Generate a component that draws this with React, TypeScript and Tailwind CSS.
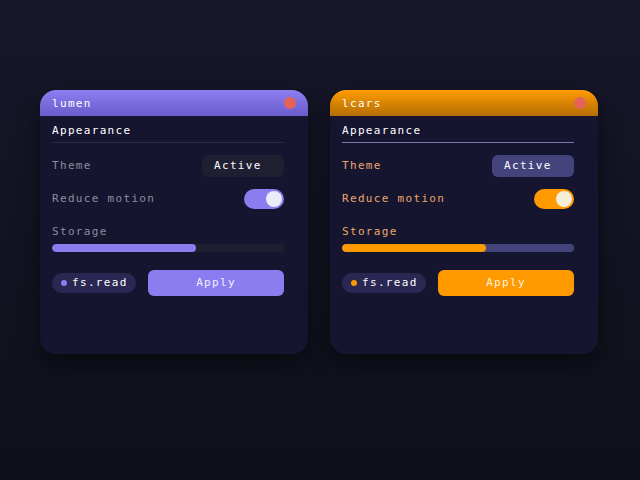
import React from 'react';

type Theme = {
  name: string;
  header: string;
  divider: string;
  label: string;
  selectBg: string;
  toggle: string;
  knob: string;
  fill: string;
  track: string;
  dot: string;
  button: string;
  buttonText: string;
};

const themes: Theme[] = [
  {
    name: 'lumen',
    header: 'bg-gradient-to-b from-[#8d7ef2] to-[#6b5ccb]',
    divider: 'bg-[#2c2a44]',
    label: 'text-[#8e8d9e]',
    selectBg: 'bg-[#1e2031]',
    toggle: 'bg-[#8b7cf0]',
    knob: 'bg-[#ecebfb]',
    fill: 'bg-[#8b7cf0]',
    track: 'bg-[#1e2031]',
    dot: 'bg-[#8b7cf0]',
    button: 'bg-[#8b7cf0]',
    buttonText: 'text-[#f1efff]',
  },
  {
    name: 'lcars',
    header: 'bg-gradient-to-b from-[#ff9d00] to-[#b46d04]',
    divider: 'bg-[#7b72a8]',
    label: 'text-[#eba86c]',
    selectBg: 'bg-[#45437c]',
    toggle: 'bg-[#ff9900]',
    knob: 'bg-[#f6eed8]',
    fill: 'bg-[#ff9900]',
    track: 'bg-[#45437c]',
    dot: 'bg-[#ff9900]',
    button: 'bg-[#ff9900]',
    buttonText: 'text-[#fff3dc]',
  },
];

const mono = "font-['DejaVu_Sans_Mono','Liberation_Mono',monospace] text-[11px] leading-[14px] tracking-[0.12em]";

const SettingsCard = ({ t }: { t: Theme }) => (
  <div className="w-[268px] h-[264px] rounded-2xl bg-[#161530] overflow-hidden shadow-[0_10px_24px_rgba(0,0,0,0.45)]">
    <div className={`h-[26px] px-3 flex items-center justify-between ${t.header}`}>
      <span className={`${mono} text-white pt-px`}>{t.name}</span>
      <span className="w-3 h-3 rounded-full bg-[#e5625a]" />
    </div>

    <div className="pl-3 pr-6 pt-2">
      <div className={`${mono} text-white`}>Appearance</div>
      <div className={`h-px mt-[4px] ${t.divider}`} />

      <div className="mt-3 flex items-center justify-between">
        <span className={`${mono} ${t.label}`}>Theme</span>
        <div className={`w-[82px] h-[22px] rounded-md pl-3 flex items-center ${t.selectBg}`}>
          <span className={`${mono} text-white`}>Active</span>
        </div>
      </div>

      <div className="mt-3 flex items-center justify-between">
        <span className={`${mono} ${t.label}`}>Reduce motion</span>
        <div className={`w-10 h-5 rounded-full p-[2px] flex justify-end ${t.toggle}`}>
          <span className={`w-4 h-4 rounded-full ${t.knob}`} />
        </div>
      </div>

      <div className={`mt-4 ${mono} ${t.label}`}>Storage</div>
      <div className={`mt-[5px] h-2 rounded-full overflow-hidden ${t.track}`}>
        <div className={`h-full w-[62%] rounded-full ${t.fill}`} />
      </div>

      <div className="mt-[18px] flex items-center gap-3">
        <div className="w-[84px] h-5 rounded-full bg-[#2a2852] pl-[9px] flex items-center gap-[5px]">
          <span className={`w-[6px] h-[6px] rounded-full ${t.dot}`} />
          <span className={`${mono} text-white`}>fs.read</span>
        </div>
        <button className={`flex-1 h-[26px] rounded-md flex items-center justify-center ${t.button}`}>
          <span className={`${mono} ${t.buttonText}`}>Apply</span>
        </button>
      </div>
    </div>
  </div>
);

export default function App() {
  return (
    <div className="w-[640px] h-[480px] bg-gradient-to-b from-[#16172a] to-[#0e1019] pt-[90px] pl-10 flex items-start gap-[22px]">
      {themes.map((t) => (
        <SettingsCard key={t.name} t={t} />
      ))}
    </div>
  );
}
